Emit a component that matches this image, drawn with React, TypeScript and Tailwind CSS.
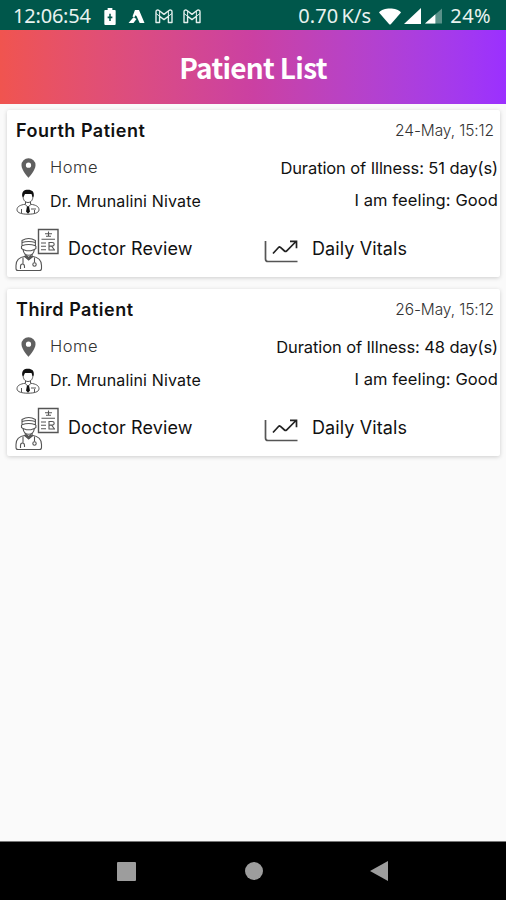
import type { ReactNode } from "react";

type Patient = {
  name: string;
  date: string;
  place: string;
  doctor: string;
  days: number;
  feeling: string;
};

const patients: Patient[] = [
  { name: "Fourth Patient", date: "24-May, 15:12", place: "Home", doctor: "Dr. Mrunalini Nivate", days: 51, feeling: "Good" },
  { name: "Third Patient", date: "26-May, 15:12", place: "Home", doctor: "Dr. Mrunalini Nivate", days: 48, feeling: "Good" },
];

function GmailIcon() {
  return (
    <svg width="18" height="15" viewBox="0 0 18 15" fill="none" stroke="#e3efec" strokeWidth="1.4" strokeLinejoin="round">
      <path d="M1 13.500V2.800C1 1.200 2.800.6 4 1.500L9 5.400 14 1.500C15.200.6 17 1.200 17 2.800v10.700h-3.600V7.200L9 10.600 4.600 7.200v6.300H1Z" />
      <path d="M4.600 7.200V2M13.400 7.200V2M1 4.500l3.600 2.700M17 4.500l-3.600 2.700" strokeWidth="1" />
    </svg>
  );
}

function StatusBar() {
  return (
    <div className="flex h-[30px] items-center bg-[#00574b] pt-[2px] font-['Noto_Sans',sans-serif] text-[20px] leading-none text-[#e8f2ef]">
      <span className="ml-[13px] w-[91px] tracking-[-0.2px]">12:06:54</span>
      <svg width="12" height="17" viewBox="0 0 12 18" fill="#fff">
        <path fillRule="evenodd" d="M3.500 0h5v2H11q1 0 1 1v14q0 1-1 1H1q-1 0-1-1V3q0-1 1-1h2.500ZM5.200 6v3H3.500v1.800h1.700v3h1.600v-3h1.700V9H6.800V6Z" />
      </svg>
      <svg className="ml-[12px]" width="17" height="15" viewBox="0 0 17 15" fill="#fff">
        <path d="M7 1h4l5.500 13h-4.800L8.500 7 6.500 6ZM5.500 8.200 8.500 10 5.500 14H.5Z" />
        <path d="M7 1h2L6.500 8.500 4.500 7.500Z" />
      </svg>
      <span className="ml-[10px]"><GmailIcon /></span>
      <span className="ml-[10px]"><GmailIcon /></span>
      <span className="ml-auto mr-[8px] tracking-[0.1px] [word-spacing:-2px]">0.70 K/s</span>
      <svg width="22" height="17" viewBox="0 0 22 17" fill="#fff">
        <path d="M0 4.500C4-.8 18-.8 22 4.500L11.800 16.200q-.8.8-1.600 0Z" />
      </svg>
      <svg className="ml-[3px]" width="17" height="16" viewBox="0 0 17 16" fill="#fff">
        <path d="M17 0v16H0Z" />
      </svg>
      <svg className="ml-[4px]" width="17" height="16" viewBox="0 0 18 16" fill="#fff">
        <path d="M18 0v16H0Z" opacity=".35" />
        <path d="M11 6.200V16H0Z" />
      </svg>
      <span className="ml-[8px] mr-[15px] tracking-[0.4px]">24%</span>
    </div>
  );
}

function PinIcon() {
  return (
    <svg className="mt-px" width="15" height="20" viewBox="0 0 16 21" fill="#606060">
      <path fillRule="evenodd" d="M8 0a7.500 7.500 0 0 0-7.500 7.500C.5 12.700 8 21 8 21s7.500-8.300 7.500-13.500A7.500 7.500 0 0 0 8 0Zm0 4.700a2.800 2.800 0 1 1 0 5.600 2.800 2.800 0 0 1 0-5.600Z" />
    </svg>
  );
}

function DoctorIcon() {
  return (
    <svg className="mt-[3px]" width="24" height="26" viewBox="0 0 24 26" fill="none" stroke="#555" strokeWidth="1">
      <path d="M7 6.500C7 11 9 13.500 12 13.500s5-2.500 5-7" />
      <path d="M6.300 7.500C5.500 2.500 8 .7 12 .7s6.500 2 5.700 6.800L16.500 8 15.500 5H9L7.500 8Z" fill="#111" stroke="none" />
      <path d="M9.500 12.800v2.400C4 16 1 17.500 1 20.800c0 3.200 5 4.400 11 4.400s11-1.200 11-4.400c0-3.300-3-4.800-8.500-5.600v-2.400" />
      <path d="m9 15.300 3 3 3-3M5.500 20v4M18.500 21v3.500M15 20h5" />
      <path d="m11 17.500-1 5 2 2.300 2-2.300-1-5Z" fill="#111" stroke="none" />
    </svg>
  );
}

function ReviewIcon() {
  return (
    <svg width="45" height="44" viewBox="0 0 45 44" fill="none" stroke="#555" strokeWidth="1.100">
      <path d="M23.500 1.500h19.500v24H23.500Z" strokeWidth="1.400" />
      <path d="M30 5.800h7M33.500 3.500v4.800M31 8.300h5M26.500 11.200h13.500M26 15h5M26 18.200h5M26 21.800h5" />
      <path d="M34 22v-7.500h3.200q2 0 2 1.800t-2 1.800H34M36.500 18l3 4M33.500 22h6.500" />
      <path d="M7 12.500q6.700-4 13.400 0v5.200q-6.700-2.300-13.400 0Z" />
      <path d="M7 14.500q6.700-2 13.400 0M6.500 18v2.500l1.500 1c.5 3.500 3 5.700 5.700 5.700s5.200-2.200 5.700-5.700l1.500-1V18M8 21.500l3.500 1.200h4.400l3.500-1.200" />
      <path d="M10.300 26v2.500l3.400 3.200 3.400-3.200V26M10.300 28.300c-6.300 1-9.300 3.500-9.300 9.200v3Q1 42.500 3 42.500h21.500q2 0 2-2v-3c0-5.700-3-8.200-9.400-9.200" />
      <path d="m9.500 28.500 4.200 3.200 4.200-3.200M8 29.500v6M19.500 29.500v5M5.500 41v-2.500q0-2.500 2-2.500t2 2.500V40" />
      <path d="m11 27.500 2.700 2.700 2.700-2.700" strokeWidth="1.800" />
      <circle cx="19.500" cy="36.500" r="1.700" />
    </svg>
  );
}

function VitalsIcon() {
  return (
    <svg width="35" height="25" viewBox="0 0 35 25" fill="none" stroke="#222" strokeWidth="1.700">
      <path d="M1.500 3v18q0 2.500 2.500 2.500h29.500" stroke="#555" />
      <path d="m9 15.500 5.500-6q1-1 2 0l4 3.500q1 .8 2 0L31.500 4M26 3.300h6.500v7" />
    </svg>
  );
}

function Row({ icon, children, right }: { icon: ReactNode; children: ReactNode; right: ReactNode }) {
  return (
    <div className="flex h-[33px] items-center pl-[8px] pr-[2px] text-[16px] text-[#111]">
      <span className="flex w-[26px] justify-center">{icon}</span>
      <span className="ml-[9px]">{children}</span>
      <span className="ml-auto">{right}</span>
    </div>
  );
}

function PatientCard({ patient }: { patient: Patient }) {
  return (
    <div className="h-[167px] rounded-[2px] bg-white shadow-[0_1px_4px_rgba(0,0,0,0.18)]">
      <div className="flex h-[41px] items-center justify-between pl-[9px] pr-[6px]">
        <h2 className="text-[18px] font-semibold tracking-[0.5px] text-[#111]">{patient.name}</h2>
        <span className="pt-px text-[15.500px] font-light tracking-[-0.100px] text-[#333]">{patient.date}</span>
      </div>
      <Row icon={<PinIcon />} right={<span className="relative top-px text-[16.500px] tracking-[-0.100px]">Duration of Illness: {patient.days} day(s)</span>}>
        <span className="text-[16.500px] font-light tracking-[0.500px] text-[#333]">{patient.place}</span>
      </Row>
      <Row icon={<DoctorIcon />} right={<span className="text-[16.500px] tracking-[0.100px]">I am feeling: {patient.feeling}</span>}>
        <span className="tracking-[0.150px]">{patient.doctor}</span>
      </Row>
      <div className="flex h-[60px] items-center text-[18px] text-[#111]">
        <div className="flex w-[257px] items-center pl-[8px]">
          <span className="mt-[5px]"><ReviewIcon /></span>
          <span className="ml-[8px] mt-[2px] tracking-[0.100px]">Doctor Review</span>
        </div>
        <span className="mt-[6px]"><VitalsIcon /></span>
        <span className="ml-[13px] mt-[2px] tracking-[0.100px]">Daily Vitals</span>
      </div>
    </div>
  );
}

export default function App() {
  return (
    <div className="flex h-[900px] w-[506px] flex-col overflow-hidden whitespace-nowrap bg-[#fafafa] font-['Inter',sans-serif]">
      <StatusBar />
      <header className="flex h-[74px] items-center justify-center bg-linear-to-r from-[#f0544f] via-[#cb40a2] to-[#9b30ff] pb-px">
        <h1 className="font-['Noto_Sans_CJK_SC','Noto_Sans',sans-serif] text-[28px] font-bold tracking-[-0.700px] text-white">Patient List</h1>
      </header>
      <main className="flex flex-1 flex-col gap-[12px] pl-[7px] pr-[6px] pt-[6px]">
        {patients.map((p) => (
          <PatientCard key={p.name} patient={p} />
        ))}
      </main>
      <nav className="flex h-[59px] items-center border-t border-[#777] bg-black pl-[117px]">
        <span className="h-[19px] w-[19px] rounded-[1px] bg-[#9d9d9d]" />
        <span className="ml-[109px] h-[18px] w-[18px] rounded-full bg-[#9d9d9d]" />
        <svg className="ml-[107px]" width="18" height="20" viewBox="0 0 18 20" fill="#9d9d9d">
          <path d="M18 0v20L0 10Z" />
        </svg>
      </nav>
    </div>
  );
}
